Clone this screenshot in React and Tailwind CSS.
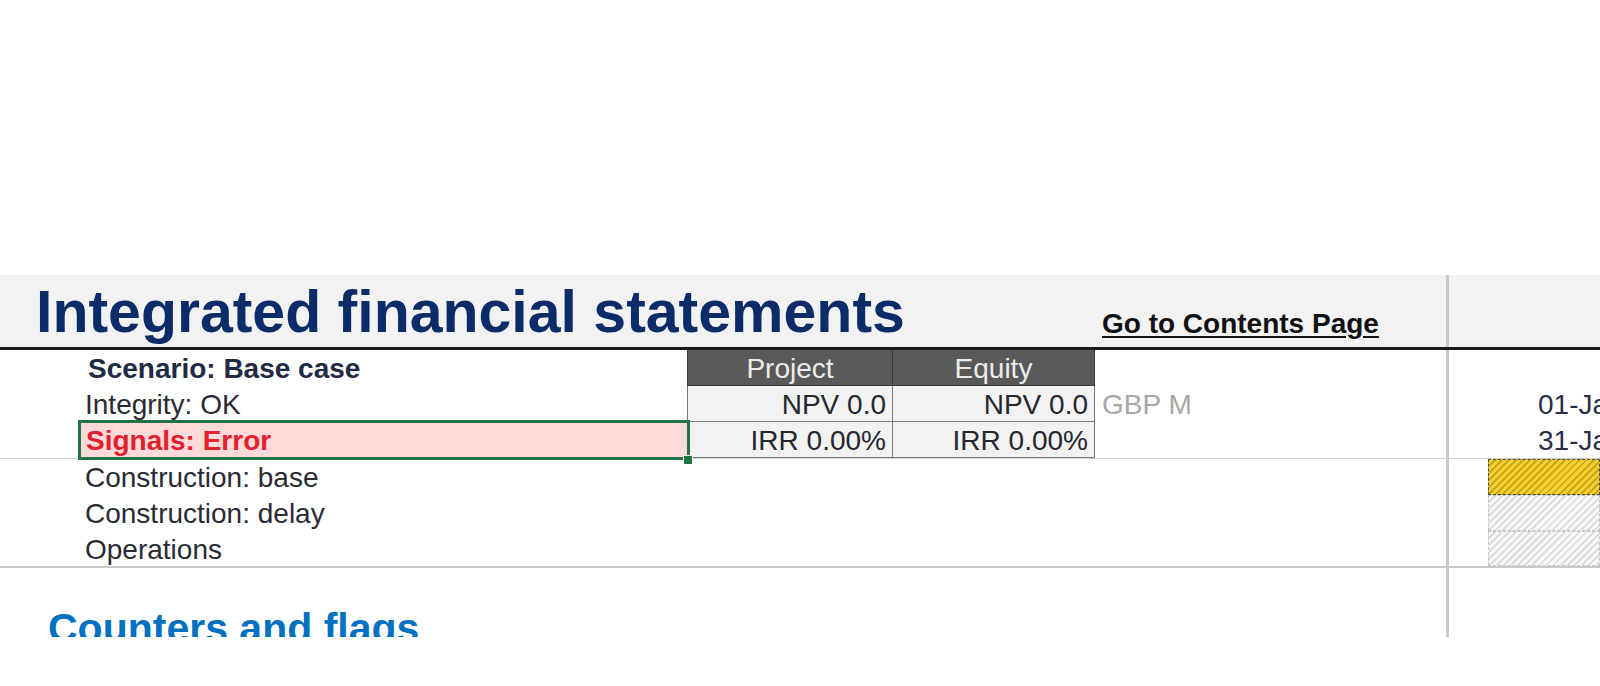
import React from 'react';

const font = "font-['Liberation_Sans',Arial,sans-serif]";

const Row = ({ className = '', left, right }) => (
  <div className={`flex w-full ${className}`}>
    <div className="flex h-full w-[1449px] shrink-0 border-r-[3px] border-r-[#c9c9c9]">{left}</div>
    <div className="relative h-full flex-1 overflow-hidden">{right}</div>
  </div>
);

const Label = ({ children, className = '' }) => (
  <div className={`flex h-full items-center pt-[2px] text-[28px] leading-[36px] whitespace-nowrap ${className}`}>{children}</div>
);

const HeadCell = ({ children, className = '' }) => (
  <div className={`flex h-full items-center justify-center pt-[2px] bg-[#595959] border-l border-b border-[#3a3a3a] text-[28px] leading-none text-[#ececec] ${className}`}>
    {children}
  </div>
);

const ValueCell = ({ children, className = '' }) => (
  <div className={`flex h-full items-center justify-end pt-[2px] bg-[#f2f2f2] border-l border-b border-[#7a7a7a] pr-[6px] text-[28px] leading-none text-[#26262e] ${className}`}>
    {children}
  </div>
);

const Bar = ({ yellow }) => (
  <div className="flex h-full pl-[39px]">
    {yellow ? (
      <div className="h-full flex-1 border border-dashed border-[#4a4a4a] bg-[repeating-linear-gradient(135deg,#f3cf2f_0px,#f3cf2f_3px,#c9a81a_3px,#c9a81a_5px)]" />
    ) : (
      <div className="h-full flex-1 border border-dashed border-[#c4c4c4] bg-[repeating-linear-gradient(135deg,#f7f7f7_0px,#f7f7f7_3px,#dcdcdc_3px,#dcdcdc_5px)]" />
    )}
  </div>
);

export default function App() {
  return (
    <div className={`h-[686px] w-full overflow-hidden bg-white ${font}`}>
      <div className="h-[275px]" />
      <div className="flex h-[362px] flex-col overflow-hidden">
        {/* title band */}
        <Row
          className="h-[72px] shrink-0 bg-[#f2f2f2]"
          left={
            <div className="flex w-full items-start">
              <div className="w-[1102px] shrink-0 pl-[36px] pt-[8px]">
                <h1 className="text-[59px] font-bold leading-none text-[#0b2c69] whitespace-nowrap">Integrated financial statements</h1>
              </div>
              <a className="mt-[35px] text-[28px] font-bold leading-none text-[#111] underline underline-offset-[3px] whitespace-nowrap">
                Go to Contents Page
              </a>
            </div>
          }
        />
        <div className="h-[3px] w-full shrink-0 bg-[#1a1a1a]" />

        {/* scenario / headers */}
        <Row
          className="h-[36px] shrink-0"
          left={
            <>
              <div className="w-[77px] shrink-0" />
              <Label className="w-[610px] shrink-0 pl-[11px] font-bold text-[#1f2a44]">Scenario: Base case</Label>
              <HeadCell className="w-[205px] shrink-0">Project</HeadCell>
              <HeadCell className="w-[203px] shrink-0 border-r">Equity</HeadCell>
            </>
          }
        />

        <Row
          className="h-[36px] shrink-0"
          left={
            <>
              <div className="w-[77px] shrink-0" />
              <Label className="w-[610px] shrink-0 pl-[8px] text-[#2a2a34]">Integrity: OK</Label>
              <ValueCell className="w-[205px] shrink-0">NPV 0.0</ValueCell>
              <ValueCell className="w-[203px] shrink-0 border-r">NPV 0.0</ValueCell>
              <Label className="pl-[7px] text-[#a6a6a6]">GBP M</Label>
            </>
          }
          right={<Label className="pl-[89px] text-[#2a2f48]">01-Jan-20</Label>}
        />

        <Row
          className="h-[37px] shrink-0 border-b border-[#d2d2d2]"
          left={
            <>
              <div className="w-[78px] shrink-0" />
              <div className="relative z-10 h-full w-[609px] shrink-0 bg-[#fdd9d9] pl-[8px]">
                <Label className="font-bold text-[#e3202e]">Signals: Error</Label>
                <div className="pointer-events-none absolute -top-[2px] -bottom-[2px] left-0 -right-[3px] border-[3px] border-[#217346]" />
                <span className="absolute -bottom-[7px] -right-[6px] h-[10px] w-[10px] border border-white bg-[#217346]" />
              </div>
              <ValueCell className="w-[205px] shrink-0">IRR 0.00%</ValueCell>
              <ValueCell className="w-[203px] shrink-0 border-r">IRR 0.00%</ValueCell>
            </>
          }
          right={<Label className="pl-[89px] text-[#2a2f48]">31-Jan-20</Label>}
        />

        {/* timing rows */}
        <Row
          className="h-[36px] shrink-0"
          left={
            <>
              <div className="w-[77px] shrink-0" />
              <Label className="pl-[8px] text-[#2a2a34]">Construction: base</Label>
            </>
          }
          right={<Bar yellow />}
        />
        <Row
          className="h-[36px] shrink-0"
          left={
            <>
              <div className="w-[77px] shrink-0" />
              <Label className="pl-[8px] text-[#2a2a34]">Construction: delay</Label>
            </>
          }
          right={<Bar />}
        />
        <Row
          className="h-[37px] shrink-0 border-b-2 border-[#c8c8c8]"
          left={
            <>
              <div className="w-[77px] shrink-0" />
              <Label className="pl-[8px] text-[#2a2a34]">Operations</Label>
            </>
          }
          right={<Bar />}
        />

        <Row className="h-[36px] shrink-0" />
        <Row
          className="h-[60px] shrink-0"
          left={
            <div className="pl-[48px] pt-[4px]">
              <h2 className="text-[41px] font-bold leading-none text-[#0070c0] whitespace-nowrap">Counters and flags</h2>
            </div>
          }
        />
      </div>
    </div>
  );
}
